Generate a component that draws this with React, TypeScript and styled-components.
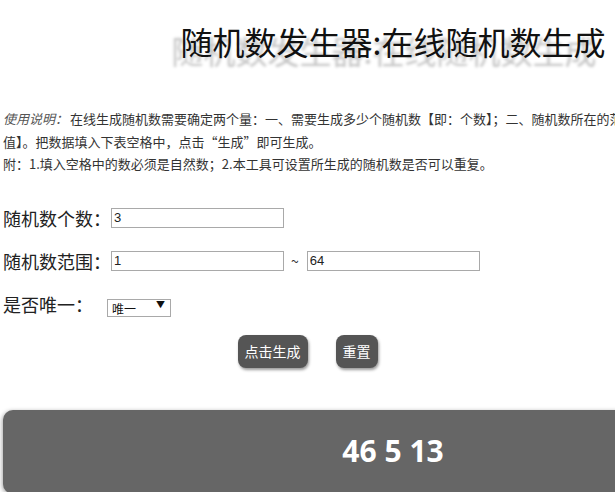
import styled, { createGlobalStyle } from 'styled-components';

const GlobalStyle = createGlobalStyle`
  html, body {
    margin: 0;
    padding: 0;
    background: #fff;
    overflow: hidden;
  }
  body {
    font-family: 'Noto Sans CJK SC', 'Noto Sans', sans-serif;
    color: #222;
  }
`;

const Page = styled.div`
  width: 615px;
  padding: 0 0 0 3px;
  box-sizing: border-box;
`;

const Title = styled.h1`
  width: 780px;
  margin: 0;
  padding-top: 19px;
  height: 59px;
  text-align: center;
  font-size: 32px;
  font-weight: normal;
  line-height: 44px;
  color: #111;
  text-shadow: -9px 9px 3px #c4c4c4;
`;

const Intro = styled.div`
  width: 752px;
  margin-top: 30px;
  font-size: 13px;
  line-height: 22.5px;
  color: #333;
`;

const Lead = styled.em`
  color: #555;
  margin-right: 2px;
`;

const Form = styled.div`
  margin-top: 32px;
  display: flex;
  flex-direction: column;
  gap: 23px;
`;

const Row = styled.div`
  display: flex;
  align-items: center;
  height: 20px;
`;

const Label = styled.span<{ gap?: number }>`
  font-size: 18px;
  color: #222;
  margin-right: ${(p) => p.gap ?? 0}px;
`;

const Field = styled.input`
  width: 173px;
  height: 20px;
  box-sizing: border-box;
  border: 1px solid #a9a9a9;
  padding: 0 2px;
  font-size: 13px;
  font-family: 'Liberation Sans', Arial, sans-serif;
  color: #222;
  outline: none;
`;

const Tilde = styled.span`
  font-size: 14px;
  margin: 0 8px 0 7px;
  color: #333;
`;

const SelectWrap = styled.div`
  position: relative;
  width: 64px;
  height: 18px;
  &::after {
    content: '▼';
    position: absolute;
    right: 6px;
    top: 3px;
    font-size: 9px;
    color: #111;
    pointer-events: none;
  }
`;

const Select = styled.select`
  appearance: none;
  width: 64px;
  height: 18px;
  box-sizing: border-box;
  border: 1px solid #a9a9a9;
  border-radius: 0;
  background: #fff;
  padding: 0 4px;
  font-size: 12px;
  font-family: 'Noto Sans CJK SC', sans-serif;
  color: #111;
  outline: none;
`;

const Buttons = styled.div`
  margin-top: 21px;
  display: flex;
  justify-content: center;
  gap: 28px;
  padding-right: 3px;
`;

const Btn = styled.button`
  height: 33px;
  padding: 0 7px;
  border: none;
  border-radius: 8px;
  background: #555;
  color: #fff;
  font-size: 14px;
  font-family: 'Noto Sans CJK SC', sans-serif;
  box-shadow: 1px 2px 3px #999;
  cursor: pointer;
`;

const Result = styled.div`
  margin-top: 42px;
  width: 780px;
  height: 84px;
  border-radius: 10px;
  background: #666;
  box-shadow: -1px 1px 4px #aaa;
  display: flex;
  align-items: center;
  justify-content: center;
  color: #fff;
  font-size: 30px;
  font-weight: bold;
  font-family: 'Noto Sans', 'Noto Sans CJK SC', sans-serif;
  padding-bottom: 2px;
  box-sizing: border-box;
`;

export default function App() {
  return (
    <>
      <GlobalStyle />
      <Page>
        <Title>随机数发生器:在线随机数生成</Title>
        <Intro>
          <Lead>使用说明：</Lead>
          在线生成随机数需要确定两个量：一、需要生成多少个随机数【即：个数】；二、随机数所在的范围【即：最小值和最大值】。把数据填入下表空格中，点击“生成”即可生成。
          <br />
          附：1.填入空格中的数必须是自然数；2.本工具可设置所生成的随机数是否可以重复。
        </Intro>
        <Form>
          <Row>
            <Label>随机数个数：</Label>
            <Field defaultValue="3" />
          </Row>
          <Row>
            <Label>随机数范围：</Label>
            <Field defaultValue="1" />
            <Tilde>~</Tilde>
            <Field defaultValue="64" />
          </Row>
          <Row>
            <Label gap={14}>是否唯一：</Label>
            <SelectWrap>
              <Select defaultValue="1">
                <option value="1">唯一</option>
                <option value="0">不唯一</option>
              </Select>
            </SelectWrap>
          </Row>
        </Form>
        <Buttons>
          <Btn>点击生成</Btn>
          <Btn>重置</Btn>
        </Buttons>
        <Result>46 5 13</Result>
      </Page>
    </>
  );
}
